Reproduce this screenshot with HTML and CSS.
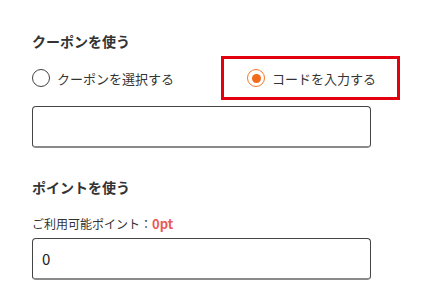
FILE: index.html
```html
<!DOCTYPE html>
<html lang="ja">
<head>
<meta charset="utf-8">
<link rel="stylesheet" href="styles.css">
</head>
<body>
<div class="page">
  <div class="title">クーポンを使う</div>
  <div class="radios">
    <label class="option opt1"><span class="radio"></span><span>クーポンを選択する</span></label>
    <label class="option"><span class="radio checked"></span><span>コードを入力する</span></label>
    <div class="highlight"></div>
  </div>
  <div class="input"></div>
  <div class="title title2">ポイントを使う</div>
  <div class="label">ご利用可能ポイント：<span class="pts">0pt</span></div>
  <div class="input input2">0</div>
</div>
</body>
</html>
```
FILE: styles.css
```css
html, body { margin: 0; padding: 0; background: #fff; }
body {
  font-family: "Noto Sans CJK JP", "Noto Sans", sans-serif;
  color: #333;
}
.page { padding: 31px 0 0 32px; }
.title { font-size: 14px; font-weight: bold; line-height: 20px; }
.title2 { margin-top: 29px; }
.radios {
  position: relative;
  display: flex;
  align-items: center;
  height: 44px;
  margin-top: 5px;
  font-size: 13px;
}
.option { display: flex; align-items: center; gap: 7px; }
.opt1 { width: 215px; }
.radio {
  box-sizing: border-box;
  width: 18px; height: 18px;
  border: 1.5px solid #444;
  border-radius: 50%;
  display: flex; align-items: center; justify-content: center;
}
.radio.checked { border-color: #f5782a; }
.radio.checked::after {
  content: "";
  width: 9px; height: 9px;
  border-radius: 50%;
  background: #f26a1b;
}
.highlight {
  position: absolute;
  left: 189px; top: 0;
  width: 179px; height: 44px;
  box-sizing: border-box;
  border: 3px solid #e3000f;
}
.input {
  box-sizing: border-box;
  margin-top: 6px;
  width: 339px; height: 42px;
  border: 1px solid #444;
  border-bottom: 2px solid #8a8a8a;
  border-radius: 4px;
  padding-left: 9px;
  font-size: 15px;
  line-height: 39px;
  color: #222;
}
.input2 { margin-top: 5px; }
.label { margin-top: 18px; font-size: 12px; line-height: 18px; }
.pts { color: #e85a5a; font-weight: bold; font-size: 13px; }
```
